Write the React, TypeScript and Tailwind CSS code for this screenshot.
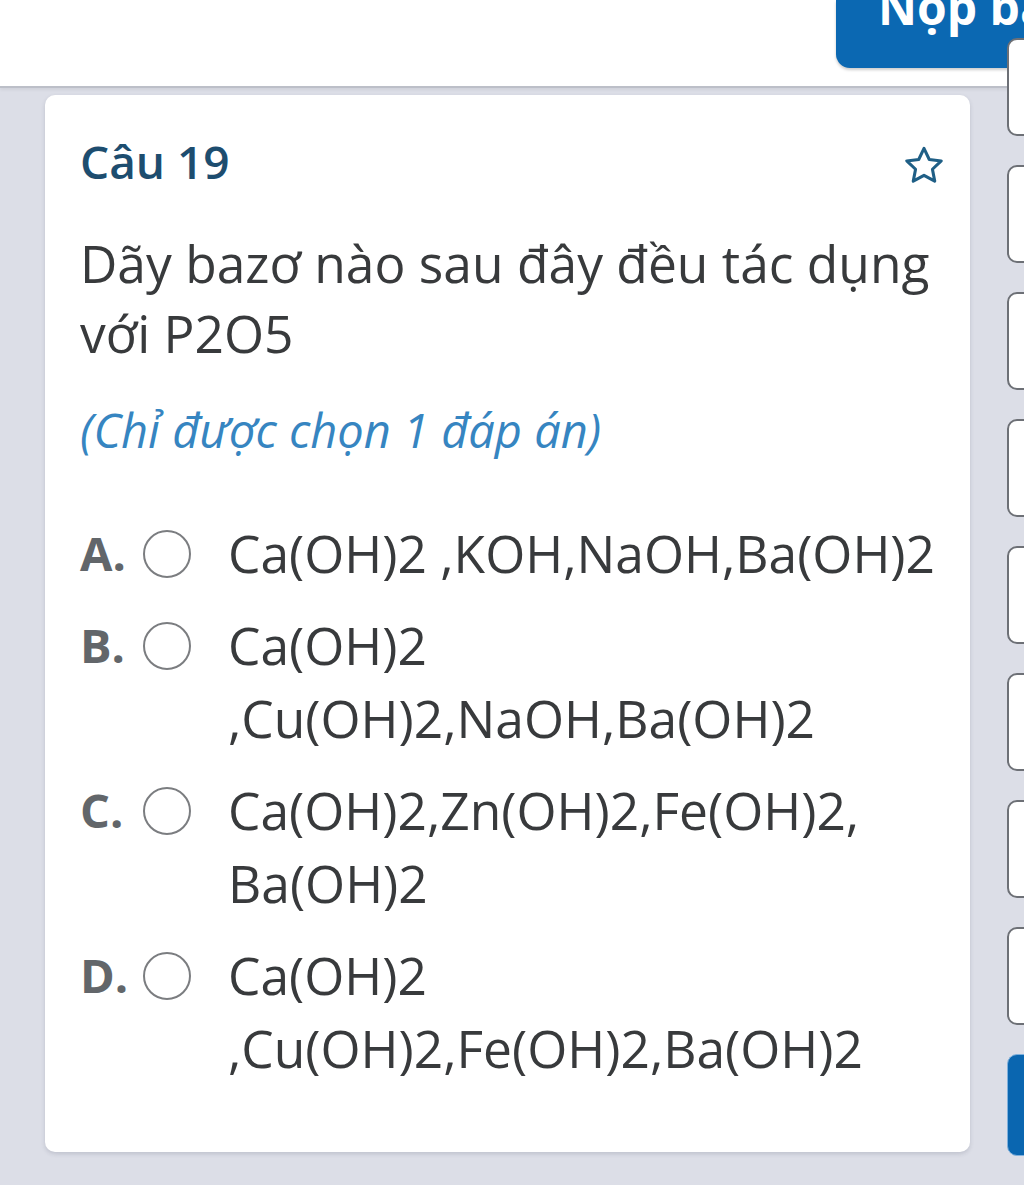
import React from "react";

const font = { fontFamily: '"Open Sans", "Noto Sans", sans-serif' };

function Star() {
  return (
    <svg width="46" height="46" viewBox="0 0 24 24" className="block">
      <polygon
        points="12,2.8 14.75,8.6 21,9.35 16.4,13.7 17.6,19.9 12,16.85 6.4,19.9 7.6,13.7 3,9.35 9.25,8.6"
        fill="none"
        stroke="#1f5f86"
        strokeWidth="1.6"
        strokeLinejoin="round"
      />
    </svg>
  );
}

type Opt = { label: string; text: string };

const options: Opt[] = [
  { label: "A.", text: "Ca(OH)2 ,KOH,NaOH,Ba(OH)2" },
  { label: "B.", text: "Ca(OH)2 ,Cu(OH)2,NaOH,Ba(OH)2" },
  { label: "C.", text: "Ca(OH)2,Zn(OH)2,Fe(OH)2, Ba(OH)2" },
  { label: "D.", text: "Ca(OH)2 ,Cu(OH)2,Fe(OH)2,Ba(OH)2" },
];

function Option({ o }: { o: Opt }) {
  return (
    <div className="flex items-start">
      <div className="w-[63px] shrink-0 text-[47px] leading-[73px] font-bold text-[#62666a]">
        {o.label}
      </div>
      <div className="w-[48px] h-[73px] shrink-0 flex items-center">
        <div className="w-[48px] h-[48px] rounded-full border-2 border-[#7b7d80] bg-white" />
      </div>
      <div className="ml-[37px] flex-1 text-[51.5px] leading-[73px] text-[#383a3c]">
        {o.text}
      </div>
    </div>
  );
}

export default function App() {
  return (
    <div
      className="relative w-[1024px] h-[1185px] overflow-hidden bg-[#dcdee7]"
      style={font}
    >
      {/* header */}
      <div className="h-[88px] bg-white border-b-2 border-[#bcbfc8] flex justify-end shadow-[0_2px_3px_rgba(0,0,0,0.06)]">
        <div className="w-[188px] h-[68px] rounded-bl-[14px] bg-[#0b68b2] overflow-hidden pl-[42px] shadow-[0_2px_3px_rgba(0,0,0,0.2)]">
          <div className="-mt-[17px] text-[48px] leading-none font-bold text-white whitespace-nowrap">
            Nộp bài
          </div>
        </div>
      </div>

      {/* card */}
      <div className="ml-[45px] mt-[7px] w-[925px] h-[1057px] bg-white rounded-[10px] shadow-[0_2px_4px_rgba(60,65,90,0.18)] pl-[35px] pr-[23px] pt-[36px]">
        <div className="flex items-start justify-between">
          <div className="text-[46px] leading-[60px] font-semibold text-[#1d4d6f]">
            Câu 19
          </div>
          <div className="mt-[12px]">
            <Star />
          </div>
        </div>
        <div className="mt-[37px] pr-[9px] text-[51.5px] leading-[70px] text-[#383a3c]">
          Dãy bazơ nào sau đây đều tác dụng với P2O5
        </div>
        <div className="mt-[32px] text-[47px] leading-[60px] italic text-[#3685c1]">
          (Chỉ được chọn 1 đáp án)
        </div>
        <div className="mt-[57px] flex flex-col gap-[19px]">
          {options.map((o) => (
            <Option key={o.label} o={o} />
          ))}
        </div>
      </div>

      {/* right rail */}
      <div className="absolute left-[1007px] top-[38px] flex flex-col gap-[29px]">
        {Array.from({ length: 8 }).map((_, i) => (
          <div
            key={i}
            className="w-[40px] h-[98px] rounded-[10px] border-2 border-[#6d7076] bg-white"
          />
        ))}
        <div className="w-[40px] h-[102px] rounded-[10px] bg-[#0a66b0] border border-[#7fb0dc]" />
      </div>
    </div>
  );
}
